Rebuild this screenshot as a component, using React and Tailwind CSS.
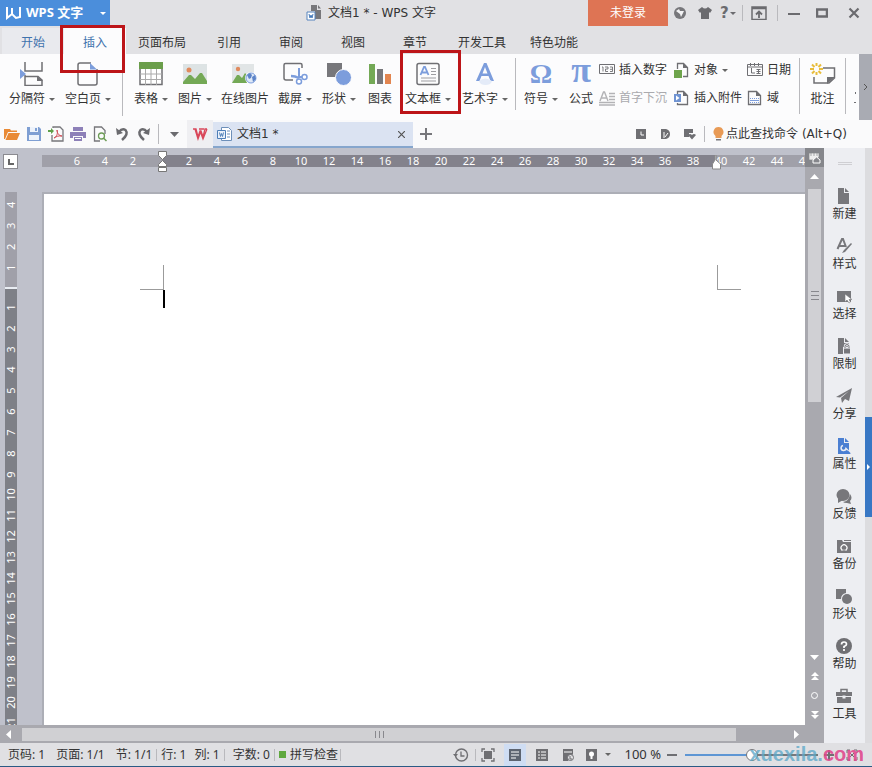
import React from 'react';

const Icon = ({ w = 16, h = 16, className = '', children }) => (
    <svg width={w} height={h} viewBox={`0 0 ${w} ${h}`} className={`shrink-0 ${className}`} fill="none" aria-hidden="true">
        {children}
    </svg>
);

const Caret = ({ className = 'text-[#666]' }) => (
    <Icon w={6} h={3} className={className}>
        <path d="M0 0h6L3 3z" fill="currentColor" />
    </Icon>
);

const Divider = ({ className = 'h-3' }) => <span className={`w-px shrink-0 bg-[#b9b9bd] ${className}`} />;

const Highlight = ({ className }) => (
    <span className={`pointer-events-none absolute z-20 border-3 border-[#bd1519] ${className}`} />
);

const DocShape = ({ fill = '#77777b' }) => <path d="M2 0h6v5h5v11H2zM9 0l4 4H9z" fill={fill} />;

const G = '#6f6f73';
const BLUE = '#7c9ddc';

/* ribbon drawings */

const BreakIcon = () => (
    <Icon w={24} h={24}>
        <path d="M5 0v9h17V0M5 13v10.500h17V18l-4-3.500H5" stroke={G} strokeWidth="1.500" />
        <path d="M0 7l6 5-6 5z" fill={BLUE} />
        <path d="M17 14l6 5h-6z" fill={G} />
    </Icon>
);
const BlankIcon = () => (
    <Icon w={24} h={24}>
        <path d="M15 1H4Q2 1 2 3v18q0 2 2 2h15q2 0 2-2V7" stroke={G} strokeWidth="1.500" />
        <path d="M14 1l7 6.500h-7z" fill={BLUE} />
    </Icon>
);
const TableIcon = () => (
    <Icon w={24} h={24}>
        <path d="M1 .5h22v22H1z" fill="#fff" stroke={G} strokeWidth="1.500" />
        <path d="M0 0h24v7H0z" fill="#6b9e4b" />
        <path d="M1 12h22M1 17.500h22M6.500 7v16M12 7v16M17.500 7v16" stroke="#aaa" />
    </Icon>
);
const PictureIcon = () => (
    <Icon w={24} h={24}>
        <path d="M0 2h24v20H0z" fill="#dde3e4" />
        <circle cx="6" cy="8" r="2.500" fill="#e08a5e" />
        <path d="M0 22v-2l6-7h2l4 4 5-6h2l5 8v3z" fill="#74a956" />
    </Icon>
);
const OnlinePictureIcon = () => (
    <Icon w={26} h={24}>
        <path d="M0 2h22v19H0z" fill="#e1e5e6" />
        <circle cx="6" cy="7" r="2.200" fill="#e08a5e" />
        <path d="M0 21l5-8h2l3 3 3-5 2 2v8z" fill="#74a956" />
        <circle cx="19" cy="16" r="6" fill="#fff" />
        <circle cx="19" cy="16" r="5" fill="#dfe9f7" stroke={BLUE} />
        <path d="M15 13l3-2 2 2-1 3-2 1zM20 15l3-2 1 4-3 3z" fill="#5d84c8" />
    </Icon>
);
const ScreenshotIcon = () => (
    <Icon w={26} h={24}>
        <path d="M20 6V3q0-1.500-1.500-1.500h-15Q2 1.500 2 3v13q0 2 2 2h7" stroke={G} strokeWidth="1.500" />
        <path d="M17 6v10M17 15h4" stroke={BLUE} strokeWidth="2" />
        <path d="M9 14q4 0 8 2" stroke={BLUE} strokeWidth="2.500" />
        <circle cx="17" cy="19.500" r="2.500" stroke={BLUE} strokeWidth="1.500" fill="#fff" />
        <circle cx="22.500" cy="15" r="2.500" stroke={BLUE} strokeWidth="1.500" fill="#fff" />
    </Icon>
);
const ShapesIcon = () => (
    <Icon w={25} h={24}>
        <path d="M0 1h15v14H0z" fill="#77777b" />
        <circle cx="16.500" cy="15.500" r="8" fill={BLUE} stroke="#fcfcfd" />
    </Icon>
);
const ChartIcon = () => (
    <Icon w={24} h={24}>
        <path d="M1 2h6v20H1z" fill="#74a956" />
        <path d="M9 7h6v15H9z" fill="#77777b" />
        <path d="M17 12h6v10h-6z" fill="#e2854f" />
    </Icon>
);
const TextBoxIcon = () => (
    <Icon w={24} h={24}>
        <rect x="1" y="1.500" width="22" height="21" rx="2" stroke={G} strokeWidth="1.500" />
        <path d="M4.500 13L8 5h1l3.500 8M6 10.500h5" stroke={BLUE} strokeWidth="1.800" />
        <path d="M15 6.500h5M15 9.500h5M15 12.500h5M5 16h15M5 19h15" stroke="#9d9da1" />
    </Icon>
);
const WordArtIcon = () => (
    <Icon w={24} h={24}>
        <path d="M3 19L11 1h2.500L21 19h-3.500l-2-5h-7l-2 5zM9.500 11.500h5L12 5z" fill={BLUE} />
        <path d="M6 19q6-5 13 0-1 4-6.500 4T6 19z" fill="#e4ebf8" />
    </Icon>
);
const CommentIcon = () => (
    <Icon w={26} h={24}>
        <path d="M13 6h11.500v10L19 21H4v-6" stroke={G} strokeWidth="1.500" />
        <path d="M17 22v-7h8z" fill={G} />
        <path d="M6.500 1v3M6.500 10v3M0 7h4M9 7h4M2 2.500l2.500 2.500M11 2.500L8.500 5M2 11.500L4.500 9M11 11.500L8.500 9" stroke="#e8bd3c" strokeWidth="2" />
    </Icon>
);
const NumberIcon = () => (
    <Icon>
        <path d="M.5 2.500h15v9H.5z" stroke={G} />
        <path d="M3 5h1v4.500M6 5h3v2H6.500v2.500H9M11 5h2.500v4.500H11M11 7.300h2" stroke={G} strokeWidth=".9" />
    </Icon>
);
const DropCapIcon = () => (
    <Icon>
        <path d="M1 11L4.500 2h1L9 11M2.500 8h5M10 3.500h6M10 6.500h6M10 9.500h6M0 12.500h16M0 15h16" stroke="#b3b3b6" strokeWidth="1.400" />
    </Icon>
);
const ObjectIcon = () => (
    <Icon>
        <path d="M3.500 7V1.500h6l4 4v9H9" stroke={G} strokeWidth="1.300" />
        <path d="M9 1v5h5z" fill={G} />
        <path d="M0 8h8v8H0z" fill="#6ea44c" />
    </Icon>
);
const AttachIcon = () => (
    <Icon>
        <path d="M3.500 4V1.500h6l4 4v9h-10V13" stroke={G} strokeWidth="1.300" />
        <path d="M9 1v5h5z" fill={G} />
        <path d="M0 4h7v8H0z" fill="#6f93d2" />
        <path d="M2 5.500L5.500 8 2 10.500z" fill="#fff" />
    </Icon>
);
const DateIcon = () => (
    <Icon>
        <path d="M.5 2.500h15v11H.5zM1 5h14" stroke={G} />
        <path d="M3.500 1v3M7.500 1v3M11.500 1v3M4.500 6v5H8M9.500 7.500h4M9.500 9.500h4M9.500 11.500h4M11.500 7v5" stroke={G} />
    </Icon>
);
const FieldIcon = () => (
    <Icon>
        <path d="M1.500 1.500h8l4 4v9h-12z" stroke={G} strokeWidth="1.300" />
        <path d="M9 1v5h5z" fill={G} />
        <path d="M3 8.500h9M3 12.500h9" stroke={BLUE} strokeDasharray="1 1" />
        <path d="M3 10.500h9" stroke={BLUE} />
    </Icon>
);

const tabs = [
    { label: '开始', cls: 'w-[62px] text-[#3f73ad] bg-[#e9eaee]' },
    { label: '插入', cls: 'w-[62px] text-[#3f73ad] bg-[#fcfcfd]', marked: true },
    { label: '页面布局', cls: 'w-[72px]' },
    { label: '引用', cls: 'w-[62px]' },
    { label: '审阅', cls: 'w-[62px]' },
    { label: '视图', cls: 'w-[62px]' },
    { label: '章节', cls: 'w-[62px]' },
    { label: '开发工具', cls: 'w-[72px]' },
    { label: '特色功能', cls: 'w-[72px]' },
];

const BigButton = ({ icon, label, caret, width = 'w-11', marked }) => (
    <button className={`relative flex h-full shrink-0 flex-col items-center pt-2 ${width}`}>
        <span className="flex h-6 items-center justify-center">{icon}</span>
        <span className="mt-[5px] flex items-center gap-1 leading-4 whitespace-nowrap">
            {label}
            {caret && <Caret />}
        </span>
        {marked && <Highlight className="-top-1 left-px h-16 w-[61px]" />}
    </button>
);

const SmallButton = ({ icon, label, caret, muted }) => (
    <button disabled={muted} className={`flex h-7 items-center gap-1 whitespace-nowrap ${muted ? 'text-[#aaaaae]' : ''}`}>
        {icon}
        {label}
        {caret && <Caret />}
    </button>
);

const Greek = ({ size, children }) => (
    <span className={`font-['Liberation_Serif',serif] font-bold text-[#7c9ddc] ${size}`}>{children}</span>
);

const TitleBar = () => (
    <header className="flex h-[26px] shrink-0 items-center">
        <button className="flex h-full w-[110px] shrink-0 items-center bg-[#4b8edb] pl-1.5 text-[13px] font-bold text-white">
            <Icon w={16} h={14}>
                <path d="M1 1v11l5-4 4 4 4-1V1M6 2v6" stroke="#fff" strokeWidth="2" />
            </Icon>
            <span className="ml-1 font-['Noto_Sans','Noto_Sans_CJK_SC',sans-serif] whitespace-nowrap">WPS 文字</span>
            <Caret className="mr-1 ml-auto text-white" />
        </button>
        <div className="flex min-w-0 flex-1 items-center justify-center gap-1.5 pl-11 whitespace-nowrap">
            <Icon>
                <path d="M5 0h6v5h4v9H9V6H5zM12 0l3 3.500h-3z" fill="#77777b" />
                <path d="M1 7h8v8H1z" fill="#fff" stroke="#5684be" />
                <path d="M3 9l1 4 1-3 1 3 1-4" stroke="#4479ba" />
            </Icon>
            <h1>文档1 * - WPS 文字</h1>
        </div>
        <button className="h-full w-20 shrink-0 bg-[#de7454] text-white">未登录</button>
        <div className="flex w-[204px] shrink-0 items-center pl-1.5 text-[#6b6b6f]">
            <button aria-label="皮肤中心" className="w-3">
                <Icon w={12} h={12}>
                    <circle cx="6" cy="6" r="6" fill="#77777b" />
                    <path d="M2 4l3-2 1 2 4 0-3 6-1-3z" fill="#f3f3f5" />
                </Icon>
            </button>
            <button aria-label="换肤" className="ml-3">
                <Icon w={14} h={12}>
                    <path d="M4 0q3 3 6 0l4 3-2 3-1-1v7H3V5L2 6 0 3z" fill="#6b6b6f" />
                </Icon>
            </button>
            <button aria-label="帮助" className="ml-2 flex w-5 items-center text-[15px] leading-5 font-bold">?<Caret className="ml-px text-[#6b6b6f]" /></button>
            <Divider className="ml-0.5 h-4" />
            <button aria-label="功能区" className="ml-2">
                <Icon w={16} h={14}>
                    <path d="M1 1h14v12.500H1zM1 2.500h14" stroke="#6b6b6f" strokeWidth="1.500" />
                    <path d="M8 12V6M5 8.500l3-3 3 3" stroke="#6b6b6f" strokeWidth="1.800" />
                </Icon>
            </button>
            <Divider className="ml-2.5 h-4" />
            <button aria-label="最小化" className="ml-2.5">
                <Icon w={12} h={12}><path d="M0 7h12" stroke="#6b6b6f" strokeWidth="2" /></Icon>
            </button>
            <button aria-label="最大化" className="ml-4">
                <Icon w={12} h={12}><path d="M1 2.500h10v7H1z" stroke="#6b6b6f" strokeWidth="2.500" /></Icon>
            </button>
            <button aria-label="关闭" className="ml-5">
                <Icon w={12} h={12}><path d="M1.500 1.500l9 9M10.500 1.500l-9 9" stroke="#6b6b6f" strokeWidth="2.200" /></Icon>
            </button>
        </div>
    </header>
);

const Ribbon = () => (
    <section className="flex h-[66px] shrink-0 bg-[#fcfcfd] pl-1">
        <BigButton icon={<BreakIcon />} label="分隔符" caret width="w-14" />
        <BigButton icon={<BlankIcon />} label="空白页" caret width="w-14" />
        <Divider className="mx-1.5 mt-1.5 h-14" />
        <BigButton icon={<TableIcon />} label="表格" caret />
        <BigButton icon={<PictureIcon />} label="图片" caret />
        <BigButton icon={<OnlinePictureIcon />} label="在线图片" width="w-14" />
        <BigButton icon={<ScreenshotIcon />} label="截屏" caret />
        <BigButton icon={<ShapesIcon />} label="形状" caret />
        <BigButton icon={<ChartIcon />} label="图表" width="w-[38px]" />
        <BigButton icon={<TextBoxIcon />} label="文本框" caret width="w-[58px]" marked />
        <BigButton icon={<WordArtIcon />} label="艺术字" caret width="w-14" />
        <Divider className="mt-1 mr-[3px] ml-0.5 h-[52px]" />
        <BigButton icon={<Greek size="text-[28px] leading-6">Ω</Greek>} label="符号" caret />
        <BigButton icon={<Greek size="text-[36px] self-start leading-4">π</Greek>} label="公式" width="w-9" />
        <div className="w-[75px] shrink-0 pt-0.5">
            <SmallButton icon={<NumberIcon />} label="插入数字" />
            <SmallButton icon={<DropCapIcon />} label="首字下沉" muted />
        </div>
        <div className="w-[73px] shrink-0 pt-0.5">
            <SmallButton icon={<ObjectIcon />} label="对象" caret />
            <SmallButton icon={<AttachIcon />} label="插入附件" />
        </div>
        <div className="w-[52px] shrink-0 pt-0.5">
            <SmallButton icon={<DateIcon />} label="日期" />
            <SmallButton icon={<FieldIcon />} label="域" />
        </div>
        <Divider className="mt-1 h-14" />
        <BigButton icon={<CommentIcon />} label="批注" width="w-[45px]" />
        <Divider className="mt-1 h-14" />
        <Icon w={3} h={12} className="mt-[38px] ml-auto">
            <path d="M1.500 0v2M0 10.500h2" stroke={G} />
        </Icon>
        <button aria-label="更多" className="ml-0.5 flex w-[13px] shrink-0 items-center justify-center bg-[#a9abb3] text-[#555]">
            <Icon w={5} h={8}><path d="M1 1l3 3-3 3" stroke="currentColor" /></Icon>
        </button>
    </section>
);

const quickIcons = [
    ['打开', <path d="M0 3h6l1 1.500h6V6H4L1 13H0zM4.500 7H16l-3 7H1.500z" fill="#e98a35" />],
    ['保存', <><path d="M1 1h12l2 2v12H1z" fill="#7f9fd3" /><path d="M4 1h8v5H4zM3 9h10v5H3z" fill="#eef3fb" /><path d="M9 2h2v3H9z" fill="#7f9fd3" /></>],
    ['输出为PDF', <><path d="M5 2V1h7l3 3v11H4V9" stroke="#77777b" strokeWidth="1.300" /><path d="M6 12c3-1 4-5 3-8 0 3 2 6 5 6-3-.5-6 .5-8 2z" stroke="#cf4d57" /><path d="M0 4h3V2l3 3-3 3V6H0z" fill="#5f9f4a" /></>],
    ['打印', <><path d="M3 1h10v4H3zM0 6h16v6h-3v-2H3v2H0z" fill="#8d80b8" /><path d="M4 11h8v4H4z" fill="#8d80b8" /><path d="M5 12.500h6" stroke="#fff" /></>],
    ['打印预览', <><path d="M8 15H2.500V1h7L13 4.500V8" stroke="#77777b" strokeWidth="1.300" /><circle cx="9.500" cy="10" r="3" stroke="#6d9c56" strokeWidth="1.300" /><path d="M11.500 12l3 3" stroke="#6d9c56" strokeWidth="1.500" /></>],
    ['撤销', <><path d="M5 6q3-4 6.500-2 3.500 4-3.500 10" stroke="#6b6b6f" strokeWidth="2.500" /><path d="M2 2l1 7 6-2z" fill="#6b6b6f" /></>],
    ['恢复', <><path d="M11 6Q8 2 4.500 4q-3.500 4 3.500 10" stroke="#6b6b6f" strokeWidth="2.500" /><path d="M14 2l-1 7-6-2z" fill="#6b6b6f" /></>],
];

const QuickBar = () => (
    <nav className="flex h-7 shrink-0 items-center bg-[#fafafb]">
        <div className="flex items-center gap-1.5 pl-1">
            {quickIcons.map(([name, art]) => (
                <button key={name} aria-label={name}><Icon>{art}</Icon></button>
            ))}
        </div>
        <Divider className="ml-1.5 h-5" />
        <button aria-label="自定义" className="ml-[11px]">
            <Icon w={9} h={5}><path d="M0 0h9L4.500 5z" fill="#6b6b6f" /></Icon>
        </button>
        <button aria-label="WPS 首页" className="ml-2 flex h-full w-[26px] items-center justify-center bg-[#efeff2]">
            <Icon>
                <path d="M1 3h3l2 8 2-6h1l2 6 2-8h2M3 3l3 10 2.500-7L11 13l4-10M7 3h5" stroke="#d9475a" strokeWidth="1.300" />
            </Icon>
        </button>
        <div className="mt-0.5 flex h-[26px] w-[200px] items-center border-b-2 border-[#86a6cd] bg-[#dbe3f2] px-1">
            <Icon>
                <path d="M4.500 4V1.500h7l3 3v10h-10V13" fill="#fff" stroke="#6d8fb9" />
                <path d="M10 5h3M10 8h3M10 11h3" stroke="#6d8fb9" />
                <path d="M.5 4.500h8v8h-8z" fill="#e9f0fa" stroke="#4e7fb8" />
                <path d="M2.500 6.500l1 4 1-3 1 3 1-4" stroke="#4e7fb8" />
            </Icon>
            <span className="ml-1">文档1 *</span>
            <button aria-label="关闭文档" className="ml-auto p-1">
                <Icon w={7} h={7}><path d="M0 0l7 7M7 0L0 7" stroke="#555" strokeWidth="1.200" /></Icon>
            </button>
        </div>
        <button aria-label="新建标签" className="ml-[7px]">
            <Icon w={12} h={12}><path d="M6 0v12M0 6h12" stroke="#77777b" strokeWidth="2" /></Icon>
        </button>
        <div className="ml-auto flex items-center pr-[25px]">
            <button aria-label="历史" className="mr-3">
                <Icon w={12} h={12}><path d="M1 1h10v10H1z" fill={G} /><path d="M6 3.500v3.500h3" stroke="#fff" /></Icon>
            </button>
            <button aria-label="文档" className="mr-3">
                <Icon w={12} h={12}><path d="M2 1h5q4 1 4 5t-4 5H2z" fill={G} /><path d="M5 4v6M6 9l3-4" stroke="#fff" /></Icon>
            </button>
            <button aria-label="任务" className="mr-2">
                <Icon w={13} h={12}><path d="M1 1h9v4H6v4H1z" fill={G} /><path d="M5 7l4 4.500L13 7q-2-2-4 0-2-2-4 0z" fill={G} /></Icon>
            </button>
            <Divider className="h-4" />
            <button className="ml-2 flex items-center gap-0.5 whitespace-nowrap">
                <Icon w={11} h={14}>
                    <path d="M5.500 0a5 5 0 0 1 3 9v2h-6V9a5 5 0 0 1 3-9z" fill="#e89a55" />
                    <path d="M3 12h5v1.500H3z" fill="#77777b" />
                </Icon>
                点此查找命令 (Alt+Q)
            </button>
        </div>
    </nav>
);

const hTicks = ['6', '4', '2', '', ...Array.from({ length: 23 }, (_, i) => String((i + 1) * 2))];

const HorizontalRuler = () => (
    <div className="relative h-3 shrink-0 bg-[#a0a0a9]">
        <div className="flex h-3 bg-[linear-gradient(to_right,#a0a0a9_120px,#83828c_120px,#83828c_673px,#a0a0a9_673px)] pl-[21px] font-['Noto_Sans',sans-serif] text-[11px] leading-3 text-white">
            {hTicks.map((n, i) => (
                <span key={i} className="w-7 shrink-0 text-center">{n}</span>
            ))}
        </div>
        <Icon w={9} h={22} className="absolute -top-1 left-[116px]">
            <path d="M.5.500h8v4l-4 4-4-4zM4.500 9.500l4 4v2h-8v-2zM.5 16.500h8v4h-8z" fill="#fff" stroke="#777" />
        </Icon>
        <Icon w={9} h={15} className="absolute top-0 left-[670px]">
            <path d="M3 0v5l-2.500 4v5h8V9L4 5V0z" fill="#fff" stroke="#888" />
        </Icon>
    </div>
);

const VerticalRuler = () => (
    <div className="mt-[3px] flex min-h-0 w-3 flex-1 flex-col bg-[#7e8087] font-['Noto_Sans',sans-serif] text-[11px] text-white">
        <div className="flex h-[97px] shrink-0 flex-col border-b-2 border-[#e9edf3] bg-[#a0a0a9] pt-0.5">
            {['4', '3', '2', '1'].map((n) => (
                <span key={n} className="flex h-[21px] rotate-180 items-center justify-center leading-3 [writing-mode:vertical-rl]">{n}</span>
            ))}
        </div>
        <div className="mt-2 flex h-[437px] shrink-0 flex-col">
            {Array.from({ length: 21 }, (_, i) => (
                <span key={i} className="flex flex-1 rotate-180 items-center justify-center leading-3 [writing-mode:vertical-rl]">{i + 1}</span>
            ))}
        </div>
    </div>
);

const Arrow = ({ d, w = 9, h = 5, label }) => (
    <button aria-label={label} className="flex items-center justify-center">
        <Icon w={w} h={h}><path d={d} fill="#fff" /></Icon>
    </button>
);

const Workspace = () => (
    <div className="flex min-w-0 flex-1 flex-col bg-[#a9a9af]">
        <div className="flex min-h-0 flex-1">
            <div className="flex min-w-0 flex-1 overflow-hidden bg-[#bfc1cb]">
                <div className="flex w-[42px] shrink-0 flex-col pl-[5px]">
                    <button aria-label="制表符" className="mt-1.5 mb-5 -ml-0.5 flex size-[15px] shrink-0 items-center justify-center border border-[#8a8a90] bg-white">
                        <Icon w={6} h={6}><path d="M1 0v5h5" stroke="#666" strokeWidth="2" /></Icon>
                    </button>
                    <VerticalRuler />
                </div>
                <div className="flex min-w-0 flex-1 flex-col pt-[7px]">
                    <HorizontalRuler />
                    <main className="mt-[25px] flex-1 border-t-2 border-l-2 border-[#acaeb6] bg-white pt-[71px]">
                        <div className="flex w-[697px] justify-between pl-24">
                            <span className="h-[25px] w-6 border-r border-b border-[#9b9b9b]" />
                            <span className="h-[25px] w-6 border-b border-l border-[#9b9b9b]" />
                        </div>
                        <div contentEditable suppressContentEditableWarning aria-label="正文" className="ml-[119px] h-[18px] w-[554px] border-l-2 border-black outline-none" />
                    </main>
                </div>
            </div>
            <div className="flex w-[19px] shrink-0 flex-col items-center">
                <button aria-label="标尺" className="flex h-[19px] w-full shrink-0 items-center justify-center bg-[#85868b]">
                    <Icon w={12} h={12}>
                        <path d="M0 1h10v4L7 8H0zM2 1v3M5 1v3M8 1v3" fill="#eee" stroke="#85868b" strokeWidth=".7" />
                        <path d="M4 11V8l3.500-3L11 8v3z" fill="#85868b" stroke="#fff" />
                    </Icon>
                </button>
                <div className="mt-[7px] mb-2.5"><Arrow d="M0 5h9L4.500 0z" label="向上" /></div>
                <div className="flex h-[213px] w-[13px] shrink-0 flex-col items-center justify-center gap-[3px] bg-[#d0d0d4]">
                    <span className="h-px w-2 bg-[#88888d]" />
                    <span className="h-px w-2 bg-[#88888d]" />
                    <span className="h-px w-2 bg-[#88888d]" />
                </div>
                <div className="mt-auto flex flex-col items-center gap-3 pb-1.5">
                    <Arrow d="M0 0h9L4.500 5z" label="向下" />
                    <Arrow d="M0 4h8L4 0zM0 8h8L4 4z" w={8} h={8} label="上一页" />
                    <button aria-label="选择浏览对象" className="size-[7px] rounded-full border border-white" />
                    <Arrow d="M0 0h8L4 4zM0 4h8L4 8z" w={8} h={8} label="下一页" />
                </div>
            </div>
        </div>
        <div className="flex h-[18px] shrink-0 items-center pr-[25px] pl-1.5">
            <Arrow d="M5 0v9L0 4.500z" w={5} h={9} label="向左" />
            <div className="mr-[58px] ml-[11px] flex h-[13px] flex-1 items-center justify-center gap-[3px] bg-[#d0d0d3]">
                <span className="h-[7px] w-px bg-[#88888d]" />
                <span className="h-[7px] w-px bg-[#88888d]" />
                <span className="h-[7px] w-px bg-[#88888d]" />
            </div>
            <Arrow d="M0 0v9l5-4.500z" w={5} h={9} label="向右" />
        </div>
    </div>
);

const sideItems = [
    ['新建', <DocShape />],
    ['样式', <><path d="M1.500 11L6 1h1l3 8M3 8h6" stroke="#77777b" strokeWidth="2" /><path d="M15 5l-7 7-2 3 3-1 7-8z" fill="#77777b" /></>],
    ['选择', <><path d="M1 3h14v11H1z" fill="#77777b" /><path d="M9 6v8l2-2 2 3 1.500-1-1.500-2.500h3z" fill="#fff" stroke="#77777b" strokeWidth=".6" /></>],
    ['限制', <><DocShape /><path d="M7 9h8v7H7z" fill="#edeef2" /><path d="M8 10.500h6v5H8z" fill="#77777b" /><path d="M9 10.500V8.500a2 2 0 0 1 4 0v2" stroke="#edeef2" strokeWidth="2.500" /><path d="M9 10.500V8.500a2 2 0 0 1 4 0v2" stroke="#77777b" /></>],
    ['分享', <path d="M0 9L16 0l-3 13-4-2-3 4-1-5 8-7-9 6.500z" fill="#77777b" />],
    ['属性', <><DocShape fill="#4b7fd2" /><path d="M7 7.500a2.500 2.500 0 1 0 3 3l5 5" stroke="#edeef2" strokeWidth="1.500" /><path d="M11 13l3 3" stroke="#4b7fd2" strokeWidth="2" /></>],
    ['反馈', <><ellipse cx="7" cy="7" rx="6.500" ry="6" fill="#77777b" /><path d="M2 10v5l5-3zM14 6q3 4 0 7l1 3-4-1q-3 0-4-1 6-1 7-8z" fill="#77777b" /></>],
    ['备份', <><path d="M1 2h5l1 2h8v11H1z" fill="#77777b" /><path d="M8 2h7v1H8z" fill="#77777b" /><path d="M5.500 11.500a3 3 0 1 1 5 0M5 12h2.500M8.500 12h2.500" stroke="#fff" strokeWidth="1.200" /></>],
    ['形状', <><path d="M0 1h10v4q-5 1-5 6H0z" fill="#77777b" /><circle cx="11" cy="11" r="5" fill="#77777b" /></>],
    ['帮助', <><circle cx="8" cy="8" r="8" fill="#6f6f73" /><path d="M5.500 6.500Q5.500 4 8 4t2.500 2.200Q10.500 7.500 8 8.500V10M8 11v2" stroke="#fff" strokeWidth="1.700" /></>],
    ['工具', <><path d="M5 4V1.500h6V4" stroke="#77777b" strokeWidth="1.500" /><path d="M0 4h16v4H0zM1 9h14v6H1z" fill="#77777b" /><path d="M6.500 7.500h3v3h-3z" fill="#edeef2" /></>],
];

const SidePanel = () => (
    <aside className="flex w-12 shrink-0">
        <div className="flex flex-1 flex-col items-center bg-[#edeef2] pt-3.5">
            <span className="h-[3px] w-3.5 shrink-0 border-y border-[#cfcfd3]" />
            {sideItems.map(([name, art], i) => (
                <button key={name} className={`flex h-[50px] shrink-0 flex-col items-center ${i === 0 ? 'mt-[23px]' : ''}`}>
                    <Icon>{art}</Icon>
                    <span className="mt-0.5 leading-4">{name}</span>
                </button>
            ))}
        </div>
        <div className="flex w-[7px] flex-col justify-center bg-[#dcdcdf] pt-[43px]">
            <button aria-label="展开面板" className="flex h-[100px] items-center justify-center bg-[#3877c4]">
                <Icon w={3} h={6}><path d="M0 0v6l3-3z" fill="#fff" /></Icon>
            </button>
        </div>
    </aside>
);

const StatusBar = () => (
    <footer className="relative flex h-6 shrink-0 items-center border-b border-[#2a5b85] bg-[#e0e0e3] pl-2 whitespace-nowrap">
        <div className="flex items-center font-['Noto_Sans','Noto_Sans_CJK_SC',sans-serif]">
            <span>页码: 1</span>
            <span className="ml-[11px]">页面: 1/1</span>
            <span className="mr-1 ml-[11px]">节: 1/1</span>
            <Divider />
            <span className="ml-1">行: 1</span>
            <span className="mr-1 ml-2">列: 1</span>
            <Divider />
            <span className="mr-1 ml-2">字数: 0</span>
            <Divider />
            <span className="mr-1 ml-1 size-[7px] bg-[#5fa83e]" />
            <button>拼写检查</button>
            <Divider className="ml-0.5 h-3" />
        </div>
        <div className="ml-auto flex items-center pr-[14px]">
            <button aria-label="历史版本">
                <Icon><circle cx="8.500" cy="8" r="6" stroke={G} strokeWidth="1.400" /><path d="M8 4.500V9h3.500" stroke={G} strokeWidth="1.300" /><path d="M0 7h5l-2.500 3z" fill={G} /></Icon>
            </button>
            <Divider className="mx-1.5 h-3" />
            <button aria-label="全屏" className="-ml-1 pl-0.5">
                <Icon><path d="M2 5V2h3M11 2h3v3M14 11v3h-3M5 14H2v-3" stroke={G} strokeWidth="1.300" /><path d="M4 4h8v8H4z" fill={G} /></Icon>
            </button>
            <button aria-label="页面视图" className="ml-2 flex h-[22px] w-[22px] items-center justify-center bg-[#cfddf3]">
                <Icon w={12} h={12}><path d="M0 0h12v12H0z" fill="#5d6470" /><path d="M2 3h8M2 6h8M2 9h5" stroke="#fff" /></Icon>
            </button>
            <button aria-label="大纲视图" className="ml-2.5">
                <Icon w={12} h={12}><path d="M0 0h12v12H0z" fill={G} /><path d="M2 3h2M5 3h5M2 6h2M5 6h5M2 9h2M5 9h5" stroke="#fff" /></Icon>
            </button>
            <button aria-label="Web 版式" className="ml-3.5">
                <Icon w={12} h={12}><path d="M1 0h10v5L6 12H1z" fill={G} /><path d="M2 3h8" stroke="#fff" /><circle cx="8.500" cy="8.500" r="3" fill="#e0e0e3" stroke={G} /><path d="M8 7v3h2" stroke={G} /></Icon>
            </button>
            <button aria-label="护眼模式" className="ml-3 flex items-center gap-2">
                <Icon w={11} h={12}><path d="M0 0h11v12H0z" fill={G} /><circle cx="5.500" cy="5" r="2.500" fill="#fff" /><path d="M4.500 7h2v3h-2z" fill="#fff" /></Icon>
                <Caret />
            </button>
            <span className="ml-3.5 font-['Noto_Sans',sans-serif] text-[13px]">100 %</span>
            <button aria-label="缩小" className="ml-1.5"><Icon w={10} h={10}><path d="M0 5h10" stroke={G} strokeWidth="2" /></Icon></button>
            <input
                type="range"
                min="0"
                max="100"
                defaultValue="50"
                aria-label="显示比例"
                className="ml-2 h-4 w-[133px] appearance-none bg-transparent [&::-webkit-slider-runnable-track]:h-0.5 [&::-webkit-slider-runnable-track]:bg-[linear-gradient(to_right,#5e96d4_50%,#77777b_50%)] [&::-webkit-slider-thumb]:-mt-[5px] [&::-webkit-slider-thumb]:size-3 [&::-webkit-slider-thumb]:appearance-none [&::-webkit-slider-thumb]:rounded-full [&::-webkit-slider-thumb]:border [&::-webkit-slider-thumb]:border-[#77777b] [&::-webkit-slider-thumb]:bg-white"
            />
            <button aria-label="放大" className="ml-1.5"><Icon w={10} h={10}><path d="M0 5h10M5 0v10" stroke={G} strokeWidth="2" /></Icon></button>
            <button aria-label="最佳显示比例" className="ml-3"><Icon w={12} h={12}><path d="M1 4V1h3M8 1h3v3M11 8v3H8M4 11H1V8M4 4l4 4M8 4L4 8" stroke={G} /></Icon></button>
        </div>
        <span className="pointer-events-none absolute right-2 bottom-0 font-['Liberation_Sans',sans-serif] text-[20px] leading-6 font-bold text-[#5fa9c9]/80">
            xuexila.<span className="text-[#e0468c]/90">com</span>
        </span>
    </footer>
);

export default function App() {
    return (
        <div className="flex h-screen flex-col overflow-hidden bg-[#e1e1e4] font-['DejaVu_Sans','Noto_Sans_CJK_SC',sans-serif] text-[12px] text-[#333]">
            <TitleBar />
            <nav className="flex h-7 shrink-0 pt-0.5 pl-0.5">
                {tabs.map((tab) => (
                    <button key={tab.label} className={`relative shrink-0 pt-1 ${tab.cls}`}>
                        {tab.label}
                        {tab.marked && <Highlight className="-top-[3px] -left-1 h-12 w-[65px]" />}
                    </button>
                ))}
            </nav>
            <Ribbon />
            <QuickBar />
            <div className="flex min-h-0 flex-1">
                <Workspace />
                <SidePanel />
            </div>
            <StatusBar />
        </div>
    );
}
